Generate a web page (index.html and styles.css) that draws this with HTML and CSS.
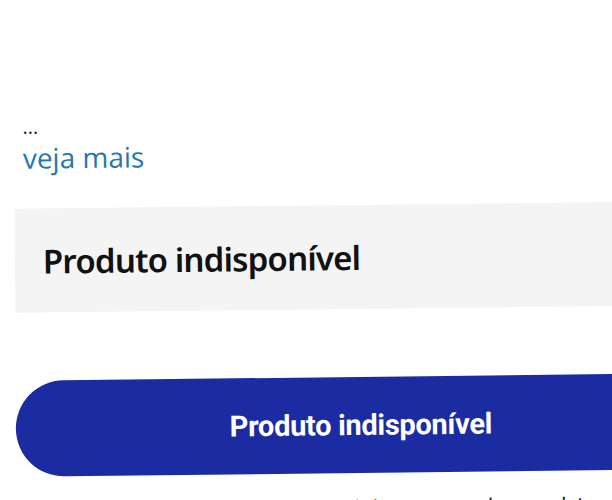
FILE: index.html
```html
<!DOCTYPE html>
<html>
	<head>
		<meta charset="utf-8">
		<title>Produto</title>
		<link rel="stylesheet" href="styles.css">
	</head>
	<body>
		<div class="page">
			<!--descrição resumida-->
			<div class="desc">
				<div class="dots">...</div>
				<a href="#" class="more">veja mais</a>
			</div>

			<!--aviso de estoque-->
			<div class="stock">Produto indisponível</div>

			<button class="buy" type="button">Produto indisponível</button>

			<p class="notice">Avise-me quando o produto estiver de volta à disponibilidade</p>
		</div>
	</body>
</html>
```

FILE: styles.css
```css
  html,body{
	  margin: 0;
	  height: 100%;
	  overflow: hidden;
	  background: #ffffff;
  }
  .page{
	  width: 720px;
	  padding-top: 117px;
	  transform: rotate(-0.65deg);
	  transform-origin: 0 0;
	  font-family: "Open Sans", "Noto Sans", sans-serif;
  }

  .desc{
	  padding-left: 21px;
  }
  .dots{
	  color: #222;
	  font-size: 20px;
	  line-height: 20px;
	  height: 20px;
  }
  .more{
	  display: inline-block;
	  color: #1f78b4;
	  font-size: 28px;
	  line-height: 42px;
	  text-decoration: none;
  }

  .stock{
	  margin: 30px 0 0 12px;
	  height: 104px;
	  padding-left: 28px;
	  background-color: #f4f4f4;
	  display: flex;
	  align-items: center;
	  font-family: "Noto Sans", sans-serif;
	  font-weight: 600;
	  font-size: 33px;
	  letter-spacing: -0.8px;
	  color: #111;
  }

  .buy{
	  display: block;
	  margin: 68px 0 0 11px;
	  width: 690px;
	  height: 96px;
	  border: none;
	  border-radius: 48px;
	  background-color: #1b2ca2;
	  color: #ffffff;
	  font-family: Roboto, sans-serif;
	  font-weight: 700;
	  font-size: 29px;
	  letter-spacing: -0.3px;
  }

  .notice{
	  margin: 22px 0 0 345px;
	  font-family: Roboto, sans-serif;
	  font-size: 20px;
	  color: #222;
	  white-space: nowrap;
  }
```
